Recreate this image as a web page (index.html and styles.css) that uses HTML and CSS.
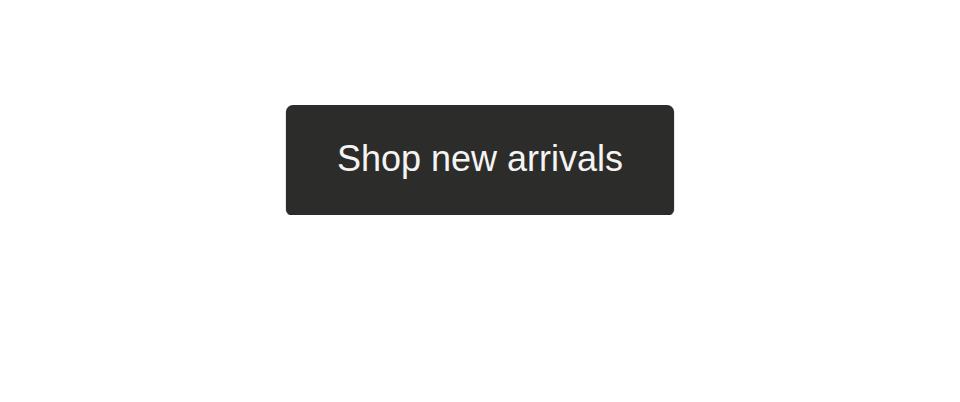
FILE: index.html
```html
<!DOCTYPE html>
<html>
<head>
<meta charset="utf-8">
<link rel="stylesheet" href="styles.css">
</head>
<body>
<main class="stage">
  <a class="cta" href="#">Shop new arrivals</a>
</main>
</body>
</html>
```

FILE: styles.css
```css
html, body {
  margin: 0;
  padding: 0;
  background: #ffffff;
}
.stage {
  display: flex;
  justify-content: center;
  padding-top: 105px;
}
.cta {
  display: flex;
  align-items: center;
  justify-content: center;
  box-sizing: border-box;
  width: 388px;
  height: 110px;
  padding-bottom: 2px;
  background: #2c2c2b;
  border-radius: 7px;
  box-shadow: 0 1px 1px #111;
  color: #f4f4f2;
  font-family: "Liberation Sans", Arial, sans-serif;
  font-size: 36px;
  text-decoration: none;
}
```
